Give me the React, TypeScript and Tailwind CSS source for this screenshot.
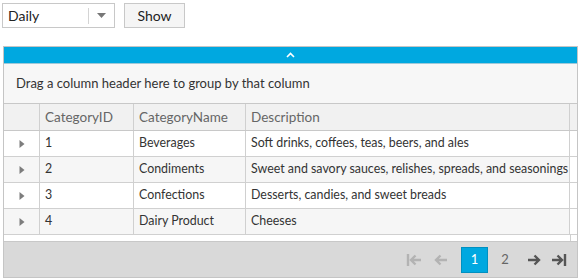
import React from 'react';

const rows = [
    { id: '1', name: 'Beverages', desc: 'Soft drinks, coffees, teas, beers, and ales' },
    { id: '2', name: 'Condiments', desc: 'Sweet and savory sauces, relishes, spreads, and seasonings' },
    { id: '3', name: 'Confections', desc: 'Desserts, candies, and sweet breads' },
    { id: '4', name: 'Dairy Product', desc: 'Cheeses' }
];

const font = { fontFamily: '"Lato", "Noto Sans", sans-serif' };

function Caret() {
    return (
        <svg width="6" height="10" viewBox="0 0 6 10">
            <path d="M0.5 1 L5.5 5 L0.5 9 Z" fill="#7d7d7d" />
        </svg>
    );
}

function PagerIcon({ kind, color }: { kind: 'first' | 'prev' | 'next' | 'last'; color: string }) {
    const paths: Record<string, string> = {
        first: 'M2 2 V14 M15 8 H5 M9.5 3.5 L5 8 L9.5 12.5',
        prev: 'M14 8 H3 M7.5 3.5 L3 8 L7.5 12.5',
        next: 'M2 8 H13 M8.5 3.5 L13 8 L8.5 12.5',
        last: 'M14 2 V14 M1 8 H11 M6.5 3.5 L11 8 L6.5 12.5'
    };
    return (
        <svg width="16" height="16" viewBox="0 0 16 16">
            <path d={paths[kind]} fill="none" stroke={color} strokeWidth="2.4" />
        </svg>
    );
}

export default function App() {
    return (
        <div className="w-[580px] h-[279px] bg-white overflow-hidden text-[#333]" style={font}>
            <div className="flex items-start pt-[3px] pl-[2px] gap-[9px]">
                <div className="flex items-center w-[113px] h-[25px] border border-[#c8c8c8] bg-white">
                    <span className="flex-1 pl-[5px] text-[14px] text-[#222]">Daily</span>
                    <div className="w-px h-[16px] bg-[#d4d4d4]" />
                    <div className="w-[25px] flex justify-center">
                        <svg width="9" height="5" viewBox="0 0 9 5">
                            <path d="M0 0 H9 L4.5 5 Z" fill="#777" />
                        </svg>
                    </div>
                </div>
                <button className="w-[61px] h-[25px] border border-[#c8c8c8] bg-[#f5f5f5] text-[14px] text-[#222]">
                    Show
                </button>
            </div>

            <div className="mt-[18px] ml-[3px] w-[575px] border border-[#c5c5c5]">
                <div className="h-[17px] bg-[#00a8e0] border-b border-[#9ec9d9] flex justify-center items-center">
                    <svg width="9" height="6" viewBox="0 0 9 6">
                        <path d="M1 5 L4.5 1.5 L8 5" fill="none" stroke="#fff" strokeWidth="1.6" />
                    </svg>
                </div>
                <div className="h-[40px] bg-[#f7f7f7] border-b border-[#c8c8c8] flex items-center pl-[12px] text-[13px] text-[#333]">
                    Drag a column header here to group by that column
                </div>

                <div className="flex h-[27px] bg-[#f1f1f1] border-b border-[#c8c8c8] text-[13.5px] text-[#666]">
                    <div className="w-[36px] border-r border-[#d0d0d0]" />
                    <div className="w-[94px] border-r border-[#d0d0d0] flex items-center pl-[5px]">CategoryID</div>
                    <div className="w-[112px] border-r border-[#d0d0d0] flex items-center pl-[5px]">CategoryName</div>
                    <div className="w-[324px] border-r border-[#d0d0d0] flex items-center pl-[5px]">Description</div>
                    <div className="w-[7px]" />
                </div>

                {rows.map((r, i) => (
                    <div
                        key={r.id}
                        className={`flex h-[26px] border-b border-[#d0d0d0] text-[12.4px] ${i % 2 === 1 ? 'bg-[#f6f6f6]' : 'bg-white'}`}
                    >
                        <div className="w-[36px] border-r border-[#d0d0d0] flex items-center justify-center">
                            <Caret />
                        </div>
                        <div className="w-[94px] border-r border-[#d0d0d0] flex items-center pl-[5px]">{r.id}</div>
                        <div className="w-[112px] border-r border-[#d0d0d0] flex items-center pl-[5px]">{r.name}</div>
                        <div className="w-[324px] border-r border-[#d0d0d0] flex items-center pl-[5px] whitespace-nowrap overflow-hidden">
                            {r.desc}
                        </div>
                        <div className="w-[7px] bg-white" />
                    </div>
                ))}
                <div className="flex h-[7px] border-b border-[#c8c8c8]">
                    <div className="w-[566px]" />
                    <div className="w-[7px] border-l border-[#d0d0d0]" />
                </div>

                <div className="h-[35px] bg-[#d9d9d9] flex items-center justify-end pr-[6px]">
                    <div className="flex items-center">
                        <div className="w-[24px] flex justify-center"><PagerIcon kind="first" color="#b3b3b3" /></div>
                        <div className="w-[24px] flex justify-center ml-[3px]"><PagerIcon kind="prev" color="#b3b3b3" /></div>
                        <div className="ml-[8px] w-[27px] h-[26px] bg-[#00a8e0] border border-[#0190c0] text-white text-[13px] flex items-center justify-center">
                            1
                        </div>
                        <div className="w-[34px] text-[13px] text-[#666] text-center">2</div>
                        <div className="w-[24px] flex justify-center"><PagerIcon kind="next" color="#555" /></div>
                        <div className="w-[24px] flex justify-center ml-[1px]"><PagerIcon kind="last" color="#555" /></div>
                    </div>
                </div>
            </div>
        </div>
    );
}
